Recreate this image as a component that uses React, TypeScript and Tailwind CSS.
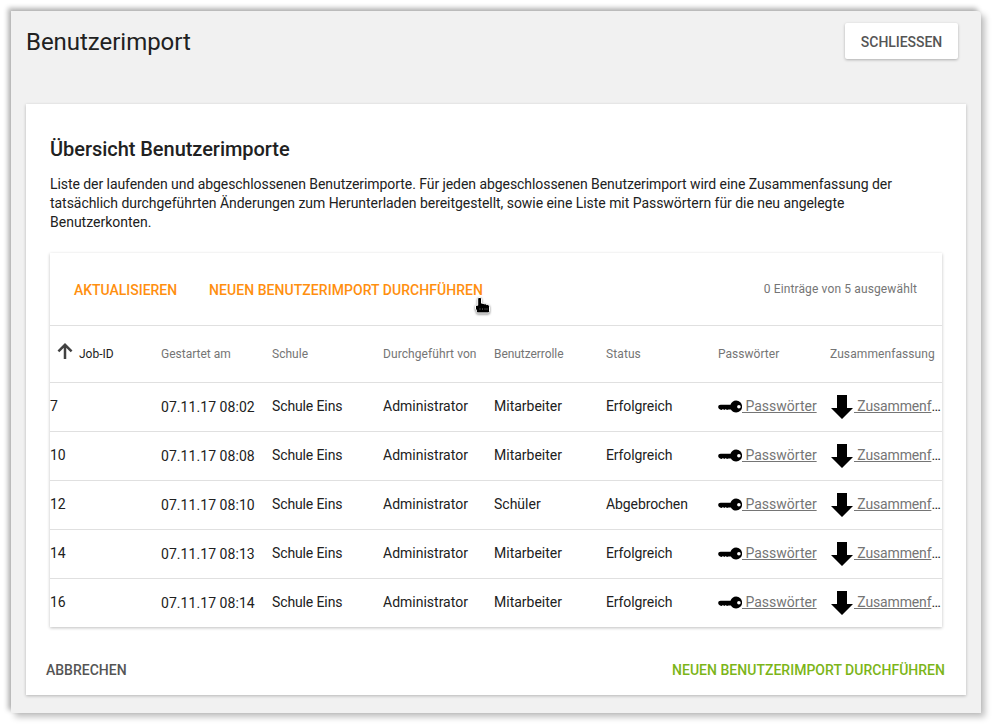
const columns = [
  { label: 'Gestartet am', spacing: 'tracking-[0px]' },
  { label: 'Schule', spacing: 'tracking-[0.03px]' },
  { label: 'Durchgeführt von', spacing: 'tracking-[0.08px]' },
  { label: 'Benutzerrolle', spacing: 'tracking-[-0.06px]' },
  { label: 'Status', spacing: 'tracking-[0.1px]' },
  { label: 'Passwörter', spacing: 'tracking-[0.03px]' },
  { label: 'Zusammenfassung', spacing: 'tracking-[0.09px]' },
];

const jobs = [
  { id: '7', started: '07.11.17 08:02', role: 'Mitarbeiter', status: 'Erfolgreich' },
  { id: '10', started: '07.11.17 08:08', role: 'Mitarbeiter', status: 'Erfolgreich' },
  { id: '12', started: '07.11.17 08:10', role: 'Schüler', status: 'Abgebrochen' },
  { id: '14', started: '07.11.17 08:13', role: 'Mitarbeiter', status: 'Erfolgreich' },
  { id: '16', started: '07.11.17 08:14', role: 'Mitarbeiter', status: 'Erfolgreich' },
];

function KeyIcon() {
  return (
    <svg className="h-6 w-6 shrink-0" viewBox="0 0 24 24">
      <path
        fillRule="evenodd"
        d="M18.1 5.6a6 6 0 0 1 0 12c-2.3 0-4.1-1.2-5.2-3h-2.5c-.6 0-.8.4-1.4.4s-.8-.7-1.4-.7-.7.7-1.3.7-.8-.7-1.4-.7-.8.6-1.4.6-.8-.4-1.4-.5C1 14.1.2 13 .2 12c0-1.4 1-2.3 2.4-2.3h9.9c.9-2.4 3-4.1 5.6-4.1Zm2.8 4.3a1.8 1.8 0 1 0 0 3.6 1.8 1.8 0 0 0 0-3.6Z"
      />
    </svg>
  );
}

function DownIcon() {
  return (
    <svg className="h-6 w-6 shrink-0" viewBox="0 0 24 24">
      <path d="M7 0h10v13h6L12 24 1 13h6Z" />
    </svg>
  );
}

function HandCursor() {
  return (
    <svg className="absolute top-[44px] left-[424px] h-[18px] w-[18px] drop-shadow-[0px_1px_1px_rgba(0,0,0,0.5)]" viewBox="0 0 18 18">
      <path
        d="M5 .5h1.2q1.3 0 1.3 1.3v4.4h1.6l.8.6h1.6l.8.7h1.4q1.8 0 1.8 2v5q0 1.4-1.4 1.4H3.8q-1.3 0-1.3-1.4v-1.2L1.5 12V8.3h2.2V1.8Q3.7.5 5 .5Z"
        stroke="#fff"
        strokeWidth="1"
      />
      <path d="M6 11.3v1.5M8.5 11.3v1.5M11 11.3v1.5M13 11.3v1.5" stroke="#777" strokeWidth=".7" />
    </svg>
  );
}

export default function App() {
  return (
    <div className="h-[724px] w-[992px] overflow-hidden bg-white pt-[11px] pl-[11px] font-['Roboto','Liberation_Sans',sans-serif] text-[#212121]">
      <main className="flex h-[702px] w-[970px] flex-col rounded-tr-[4px] bg-[#f1f1f1] px-[15px] shadow-[4px_4px_6px_rgba(0,0,0,0.25),-3px_-3px_5px_rgba(0,0,0,0.3)]">
        <header className="flex h-[93px] shrink-0 items-start justify-between pt-3 pr-2">
          <h1 className="pt-[3px] text-2xl leading-8 tracking-[-0.03px]">Benutzerimport</h1>
          <button className="h-9 w-[113px] rounded-[2px] bg-white pt-[2px] text-sm font-medium tracking-[-0.05px] text-[#555] shadow-[0_1px_3px_rgba(0,0,0,0.28)]">
            SCHLIESSEN
          </button>
        </header>

        <section className="flex h-[591px] flex-col bg-white px-6 shadow-[0_1px_3px_rgba(0,0,0,0.25)]">
          <h2 className="pt-[31px] text-xl leading-7 font-medium tracking-[-0.04px]">Übersicht Benutzerimporte</h2>
          <p className="mt-[12px] text-sm leading-[19px] whitespace-nowrap">
            <span className="tracking-[-0.062px]">Liste der laufenden und abgeschlossenen Benutzerimporte. Für jeden abgeschlossenen Benutzerimport wird eine Zusammenfassung der</span>
            <br />
            <span className="tracking-[-0.042px]">tatsächlich durchgeführten Änderungen zum Herunterladen bereitgestellt, sowie eine Liste mit Passwörtern für die neu angelegte</span>
            <br />
            Benutzerkonten.
          </p>

          <div className="mt-[21px] w-[892px] shrink-0 shadow-[0_1px_3px_rgba(0,0,0,0.25)]">
            <div className="relative flex h-[72px] items-center justify-between pr-[25px] pl-6">
              <div className="flex gap-8 pt-[2px] text-sm font-medium text-[#ff8f0f]">
                <button className="tracking-[-0.03px]">AKTUALISIEREN</button>
                <button className="tracking-[0.05px]">NEUEN BENUTZERIMPORT DURCHFÜHREN</button>
              </div>
              <span className="text-xs tracking-[0.13px] text-[#757575]">0 Einträge von 5 ausgewählt</span>
              <HandCursor />
            </div>

            <div className="grid h-[57px] grid-cols-[111px_111px_111px_111px_112px_112px_112px_112px] items-center border-t border-[#e0e0e0] text-xs text-[#757575]">
              <div className="flex items-center pl-[7px] text-[#212121]">
                <svg className="-mt-[6px] mr-[6px] h-4 w-4" viewBox="0 0 16 16" fill="none" stroke="#424242" strokeWidth="2.5">
                  <path d="M8 16V1.8M1.4 8.4 8 1.8l6.6 6.6" />
                </svg>
                Job-ID
              </div>
              {columns.map((column) => (
                <div key={column.label} className={`whitespace-nowrap ${column.spacing}`}>{column.label}</div>
              ))}
            </div>

            {jobs.map((job) => (
              <div key={job.id} className="grid h-[49px] grid-cols-[111px_111px_111px_111px_112px_112px_112px_112px] items-center border-t border-[#e0e0e0] pb-[2px] text-sm">
                <div>{job.id}</div>
                <div className="pt-[2px] tracking-[0.06px]">{job.started}</div>
                <div className="tracking-[-0.12px]">Schule Eins</div>
                <div>Administrator</div>
                <div>{job.role}</div>
                <div className="tracking-[-0.1px]">{job.status}</div>
                <a className="flex items-center text-[#757575]">
                  <span className="pt-px text-black"><KeyIcon /></span>
                  <span className="whitespace-pre underline"> Passwörter</span>
                </a>
                <div className="flex items-center whitespace-pre">
                  <span className="pt-px text-black"><DownIcon /></span>
                  <a className="tracking-[-0.15px] text-[#757575] underline"> Zusammenf</a>…
                </div>
              </div>
            ))}
          </div>

          <footer className="-mx-1 mt-[33px] flex justify-between text-sm font-medium">
            <button className="text-[#555]">ABBRECHEN</button>
            <button className="mr-[1px] tracking-[0.02px] text-[#7cb518]">NEUEN BENUTZERIMPORT DURCHFÜHREN</button>
          </footer>
        </section>
      </main>
    </div>
  );
}
